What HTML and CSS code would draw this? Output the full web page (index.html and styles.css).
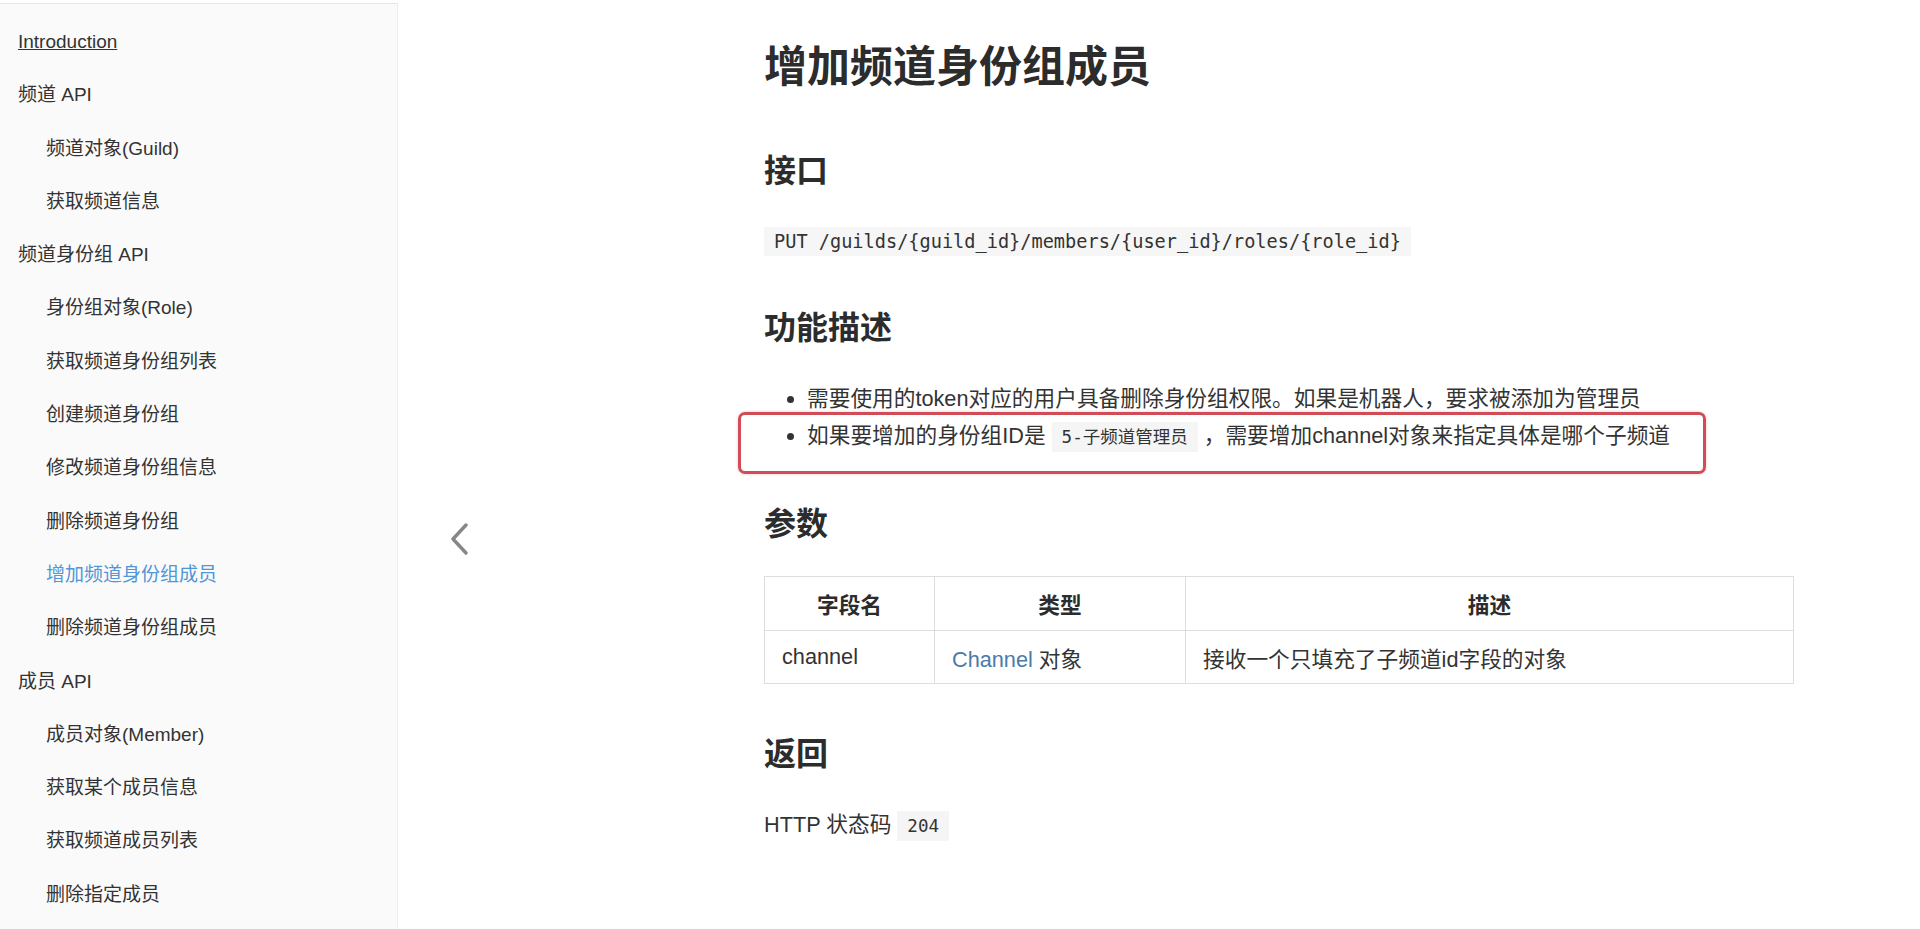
FILE: index.html
```html
<!DOCTYPE html>
<html>
    <head>
        <meta charset="UTF-8">
        <meta name="viewport" content="width=device-width,initial-scale=1" />
        <title>增加频道身份组成员</title>
        <link rel="stylesheet" href="styles.css">
    </head>
    <body>
        <div class="page">
            <div class="sidebar">
                <ul class="toc">
                    <li class="item"><a class="intro" href="#">Introduction</a></li>
                    <li class="item">频道 API</li>
                    <li class="item sub">频道对象(Guild)</li>
                    <li class="item sub">获取频道信息</li>
                    <li class="item">频道身份组 API</li>
                    <li class="item sub">身份组对象(Role)</li>
                    <li class="item sub">获取频道身份组列表</li>
                    <li class="item sub">创建频道身份组</li>
                    <li class="item sub">修改频道身份组信息</li>
                    <li class="item sub">删除频道身份组</li>
                    <li class="item sub active">增加频道身份组成员</li>
                    <li class="item sub">删除频道身份组成员</li>
                    <li class="item">成员 API</li>
                    <li class="item sub">成员对象(Member)</li>
                    <li class="item sub">获取某个成员信息</li>
                    <li class="item sub">获取频道成员列表</li>
                    <li class="item sub">删除指定成员</li>
                </ul>
            </div>
            <div class="main">
                <div class="nav-prev">
                    <svg width="20" height="32" viewBox="0 0 20 32">
                        <polyline points="16,2 3,16 16,30" fill="none" stroke="#878787" stroke-width="3.4" stroke-linecap="round" stroke-linejoin="round"/>
                    </svg>
                </div>
                <div class="doc">
                    <h1>增加频道身份组成员</h1>

                    <h2>接口</h2>
                    <pre class="endpoint">PUT /guilds/{guild_id}/members/{user_id}/roles/{role_id}</pre>

                    <h2>功能描述</h2>
                    <ul class="desc">
                        <li>需要使用的token对应的用户具备删除身份组权限。如果是机器人，要求被添加为管理员</li>
                        <li class="marked">如果要增加的身份组ID是 <code class="tag">5-子频道管理员</code> ，需要增加channel对象来指定具体是哪个子频道</li>
                    </ul>

                    <h2>参数</h2>
                    <table class="params">
                        <tr>
                            <th class="col-name">字段名</th>
                            <th class="col-type">类型</th>
                            <th>描述</th>
                        </tr>
                        <tr>
                            <td>channel</td>
                            <td><a class="link" href="#">Channel</a> 对象</td>
                            <td>接收一个只填充了子频道id字段的对象</td>
                        </tr>
                    </table>

                    <h2>返回</h2>
                    <p class="text">HTTP 状态码 <code class="tag">204</code></p>
                </div>
            </div>
        </div>
    </body>
</html>
```

FILE: styles.css
```css
* {
    margin: 0;
    padding: 0;
    box-sizing: border-box;
}
html, body {
    width: 100%;
    height: 100%;
}
body {
    font-family: "Liberation Sans", "Noto Sans CJK SC", sans-serif;
    color: #333;
    background: #fff;
    overflow: hidden;
}
.page {
    display: flex;
    height: 929px;
}

/* sidebar */
.sidebar {
    width: 398px;
    flex: none;
    margin-top: 3px;
    padding-top: 11px;
    background: #fafafa;
    border-top: 1px solid #e6e6e6;
    border-right: 1px solid #ececec;
    overflow: hidden;
}
.toc {
    list-style: none;
}
.item {
    padding-left: 18px;
    font-size: 19px;
    line-height: 53.3px;
    color: #333;
    white-space: nowrap;
}
.item.sub {
    padding-left: 46px;
}
.item.active {
    color: #5196d6;
}
.intro {
    color: #333;
    text-decoration: underline;
}

/* main */
.main {
    flex: 1;
    display: flex;
}
.nav-prev {
    width: 366px;
    flex: none;
    display: flex;
    align-items: center;
    padding-left: 52px;
    padding-top: 148px;
}
.doc {
    width: 1030px;
    padding-top: 42px;
}
h1 {
    font-size: 43px;
    line-height: 50px;
    font-weight: bold;
    color: #2c2c2c;
    margin-bottom: 60px;
}
h2 {
    font-size: 32px;
    line-height: 38px;
    font-weight: bold;
    color: #2c2c2c;
    margin: 51px 0 33px;
}
.endpoint {
    width: fit-content;
    margin: 37px 0 53px;
    padding: 0 10px;
    font-family: "DejaVu Sans Mono", "Noto Sans CJK SC", monospace;
    font-size: 18.6px;
    line-height: 29px;
    color: #333;
    background: #f6f6f6;
}
.desc {
    padding-left: 43px;
}
.desc li {
    font-size: 21.7px;
    line-height: 37px;
}
.marked {
    position: relative;
}
.marked::after {
    content: "";
    position: absolute;
    left: -69px;
    top: -5px;
    width: 962px;
    height: 56px;
    border: 3px solid #d04c57;
    border-radius: 7px;
    box-shadow: 0 0 3px rgba(208, 76, 87, 0.35);
}
.tag {
    display: inline-block;
    padding: 0 10px;
    font-family: "DejaVu Sans Mono", "Noto Sans CJK SC", monospace;
    font-size: 17.5px;
    line-height: 30px;
    background: #f5f5f5;
    color: #333;
}

/* table */
.params {
    width: 1030px;
    border-collapse: collapse;
    font-size: 21.7px;
}
.params th,
.params td {
    border: 1px solid #dedede;
    padding: 0 17px;
}
.params th {
    height: 54px;
    font-weight: bold;
    text-align: center;
    color: #2c2c2c;
}
.params td {
    height: 53px;
}
.col-name {
    width: 170px;
}
.col-type {
    width: 251px;
}
.link {
    color: #4b7aa8;
    text-decoration: none;
}
.text {
    font-size: 21.7px;
    line-height: 37px;
}
```
